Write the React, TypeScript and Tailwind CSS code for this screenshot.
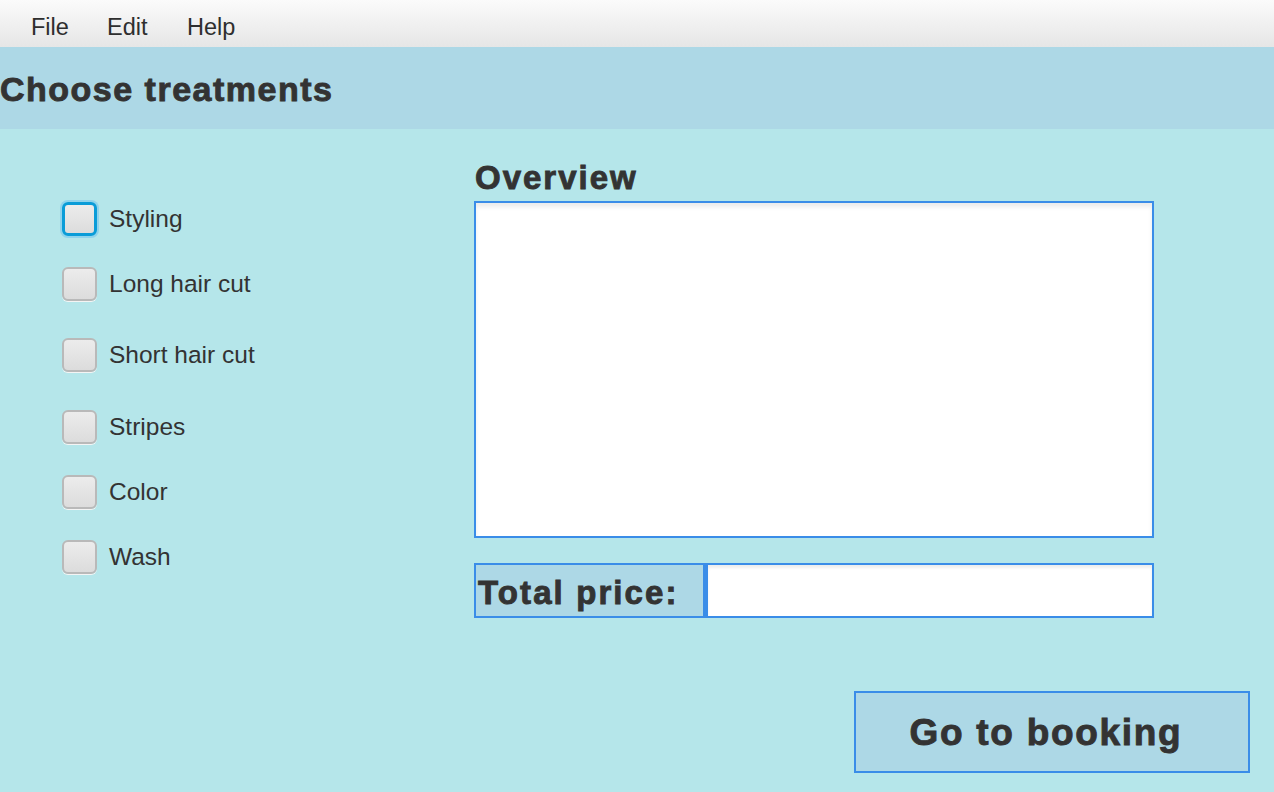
const treatments = [
  { label: "Styling", focused: true, gap: "mt-0" },
  { label: "Long hair cut", focused: false, gap: "mt-[31px]" },
  { label: "Short hair cut", focused: false, gap: "mt-[37px]" },
  { label: "Stripes", focused: false, gap: "mt-[38px]" },
  { label: "Color", focused: false, gap: "mt-[31px]" },
  { label: "Wash", focused: false, gap: "mt-[31px]" },
];

const CheckRow = ({ label, focused, gap }: { label: string; focused: boolean; gap: string }) => {
  return (
    <label className={`flex items-center gap-[12px] ${gap}`}>
      <span
        className={
          focused
            ? "w-[35px] h-[34px] rounded-[6px] border-[3px] border-[#0a9cd8] ring-2 ring-[#8fd3ec] bg-gradient-to-b from-[#ececec] to-[#dcdcdc]"
            : "w-[35px] h-[34px] rounded-[6px] border-2 border-[#b9b9b9] bg-gradient-to-b from-[#ececec] to-[#dcdcdc] shadow-[0_1px_0_#f4f4f4]"
        }
      />
      <span className="text-[24.5px] leading-none text-[#333]">{label}</span>
    </label>
  );
};

export default function App() {
  return (
    <div className="w-[1274px] h-[792px] flex flex-col bg-[#b5e6ea] font-['Liberation_Sans',Arial,sans-serif] text-[#333] overflow-hidden">
      <div className="h-[47px] flex items-center pl-[31px] pt-[8px] bg-gradient-to-b from-[#fbfbfb] to-[#e6e6e6] text-[23.5px] text-[#2e2e2e]">
        <span className="w-[76px]">File</span>
        <span className="w-[80px]">Edit</span>
        <span>Help</span>
      </div>

      <div className="h-[82px] flex items-center bg-[#add8e6]">
        <h1 className="text-[34px] font-bold tracking-[1.5px] leading-none mt-[2px] [-webkit-text-stroke:0.9px_#333]">Choose treatments</h1>
      </div>

      <div className="flex-1 flex flex-col">
        <div className="flex">
          <div className="w-[474px] pl-[62px] pt-[73px]">
            {treatments.map((t) => (
              <CheckRow key={t.label} {...t} />
            ))}
          </div>

          <div className="w-[680px] pt-[32px]">
            <h2 className="text-[33px] font-bold tracking-[2px] leading-none h-[40px] pl-[1px] [-webkit-text-stroke:0.9px_#333]">Overview</h2>
            <div className="h-[337px] border-2 border-[#3a8de8] bg-white shadow-[inset_0_4px_4px_rgba(0,0,0,0.08)]" />
            <div className="mt-[25px] h-[55px] flex">
              <div className="w-[231px] border-2 border-[#3a8de8] bg-[#add8e6] flex items-center pl-[2px]">
                <span className="text-[33px] font-bold tracking-[2.1px] leading-none mt-[4px] [-webkit-text-stroke:0.9px_#333]">Total price:</span>
              </div>
              <div className="flex-1 border-2 border-l-[3px] border-[#3a8de8] bg-white shadow-[inset_0_3px_3px_rgba(0,0,0,0.07)]" />
            </div>
          </div>
        </div>

        <div className="mt-auto flex justify-end pr-[24px] pb-[19px]">
          <button className="w-[396px] h-[82px] border-2 border-[#3a8de8] bg-[#add8e6] flex items-center justify-center pr-[12px]">
            <span className="text-[37px] font-bold tracking-[1.7px] leading-none text-[#333] [-webkit-text-stroke:0.9px_#333]">Go to booking</span>
          </button>
        </div>
      </div>
    </div>
  );
}
